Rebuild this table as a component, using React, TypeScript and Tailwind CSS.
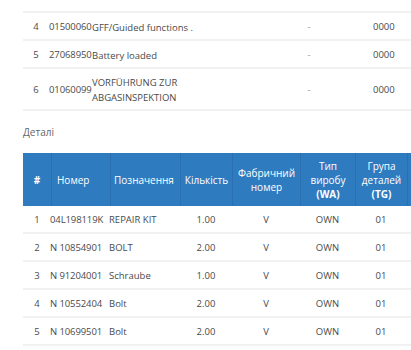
const topRows = [
  { n: '3', code: '02100100', desc: ['Activated belt removed - instance'], dash: '-', val: '0000', h: 'h-[28px]', shift: '-mt-[6px]' },
  { n: '4', code: '01500060', desc: ['GFF/Guided functions .'], dash: '-', val: '0000', h: 'h-[28px]', shift: '' },
  { n: '5', code: '27068950', desc: ['Battery loaded'], dash: '-', val: '0000', h: 'h-[28px]', shift: '' },
  { n: '6', code: '01060099', desc: ['VORFÜHRUNG ZUR', 'ABGASINSPEKTION'], dash: '-', val: '0000', h: 'h-[42px]', shift: '' },
];

const parts = [
  { n: '1', num: '04L198119K', name: 'REPAIR KIT', qty: '1.00', v: 'V', wa: 'OWN', tg: '01' },
  { n: '2', num: 'N 10854901', name: 'BOLT', qty: '2.00', v: 'V', wa: 'OWN', tg: '01' },
  { n: '3', num: 'N 91204001', name: 'Schraube', qty: '1.00', v: 'V', wa: 'OWN', tg: '01' },
  { n: '4', num: 'N 10552404', name: 'Bolt', qty: '2.00', v: 'V', wa: 'OWN', tg: '01' },
  { n: '5', num: 'N 10699501', name: 'Bolt', qty: '2.00', v: 'V', wa: 'OWN', tg: '01' },
];

const cols = 'grid grid-cols-[28px_59px_70px_52px_68px_55px_52px_1fr]';

export default function App() {
  return (
    <div className="w-[411px] h-[350px] overflow-hidden bg-white font-['Open_Sans',sans-serif] text-[9.5px] text-[#4a4a4a]">
      <div className="pl-[23px] mt-[-15px]">
        {topRows.map((r) => (
          <div key={r.n} className={`border-b-2 border-[#f1f1f1] pt-[2px] ${r.h} flex items-center`}>
            <div className={`grid grid-cols-[26px_43px_200px_34px_47px_1fr] items-center w-full ${r.shift}`}>
              <div className="text-center">{r.n}</div>
              <div className="tracking-[-0.1px]">{r.code}</div>
              <div className="leading-[15px]">
                {r.desc.map((d) => (
                  <div key={d}>{d}</div>
                ))}
              </div>
              <div className="text-center text-[#999]">{r.dash}</div>
              <div />
              <div>{r.val}</div>
            </div>
          </div>
        ))}

        <div className="h-[42px] flex items-center text-[#666] text-[10px]">Деталі</div>

        <div className={`${cols} h-[53px] bg-[#2f7bbf] text-white text-[10px] leading-[14px]`}>
          <div className="flex items-center justify-center font-bold">#</div>
          <div className="flex items-center px-[5px] border-l border-[#2a70b0]">Номер</div>
          <div className="flex items-center px-[3px] border-l border-[#2a70b0]">Позначення</div>
          <div className="flex items-center justify-center border-l border-[#2a70b0]">Кількість</div>
          <div className="flex items-center justify-center text-center border-l border-[#2a70b0]">
            Фабричний
            <br />
            номер
          </div>
          <div className="flex flex-col items-center justify-center border-l border-[#2a70b0]">
            <span>Тип</span>
            <span>виробу</span>
            <span className="font-bold">(WA)</span>
          </div>
          <div className="flex flex-col items-center justify-center border-l border-[#2a70b0]">
            <span>Група</span>
            <span>деталей</span>
            <span className="font-bold">(TG)</span>
          </div>
          <div className="border-l border-[#2a70b0]" />
        </div>

        {parts.map((p) => (
          <div key={p.n} className={`${cols} h-[28px] items-center border-b-2 border-[#f1f1f1] pt-[2px]`}>
            <div className="text-center">{p.n}</div>
            <div className="-ml-px tracking-[-0.1px]">{p.num}</div>
            <div className="-ml-px">{p.name}</div>
            <div className="text-center">{p.qty}</div>
            <div className="text-center">{p.v}</div>
            <div className="text-center">{p.wa}</div>
            <div className="text-center">{p.tg}</div>
            <div />
          </div>
        ))}
      </div>
    </div>
  );
}
